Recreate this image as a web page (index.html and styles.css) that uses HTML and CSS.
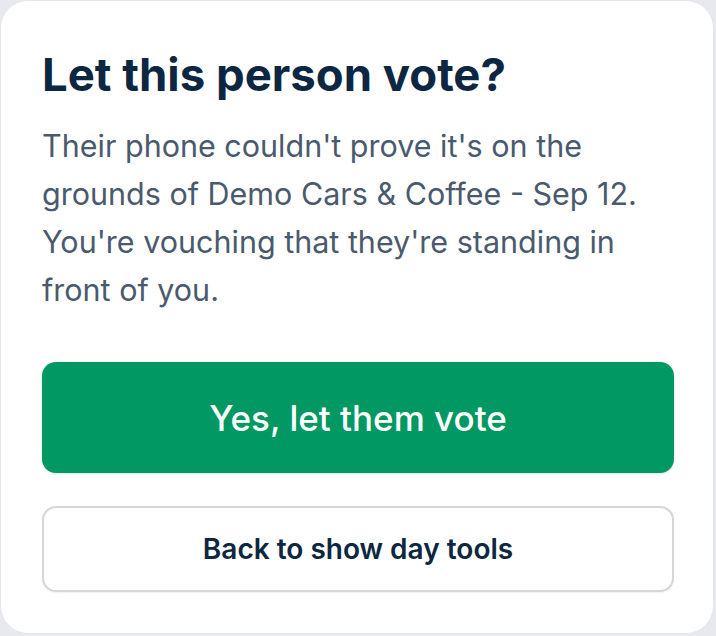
FILE: index.html
```html
<!DOCTYPE html>
<html lang="en">
<head>
<meta charset="utf-8">
<title>Let this person vote?</title>
<link rel="stylesheet" href="styles.css">
</head>
<body>
<div class="card">
  <h1 class="title">Let this person vote?</h1>
  <p class="desc">Their phone couldn't prove it's on the grounds of Demo Cars &amp; Coffee - Sep 12. You're vouching that they're standing in front of you.</p>
  <div class="actions">
    <button class="btn btn-primary">Yes, let them vote</button>
    <button class="btn btn-secondary">Back to show day tools</button>
  </div>
</div>
</body>
</html>
```
FILE: styles.css
```css
html, body {
  margin: 0;
  padding: 0;
}
body {
  background: #e8e9ee;
  width: 716px;
  height: 636px;
  font-family: Inter, "Noto Sans", sans-serif;
}
.card {
  box-sizing: border-box;
  width: 714px;
  height: 634px;
  background: #ffffff;
  border: 1px solid #e4e5ea;
  border-radius: 28px;
  padding: 46px 40px 0 41px;
}
.title {
  margin: 0;
  font-size: 45.5px;
  line-height: 56px;
  font-weight: 700;
  color: #0d2742;
}
.desc {
  margin: 19px 0 0;
  font-size: 30.5px;
  line-height: 48px;
  color: #4a5a6e;
  font-weight: 400;
}
.actions {
  display: flex;
  flex-direction: column;
  gap: 33px;
  margin-top: 48px;
}
.btn {
  font-family: Inter, "Noto Sans", sans-serif;
  width: 632px;
  border-radius: 14px;
  cursor: pointer;
}
.btn-primary {
  height: 111px;
  background: #029863;
  border: none;
  color: #ffffff;
  font-size: 35px;
  font-weight: 500;
  box-shadow: 0 1px 3px rgba(0,0,0,0.12);
}
.btn-secondary {
  height: 86px;
  background: #ffffff;
  border: 2px solid #d3d6dd;
  color: #0d2742;
  font-size: 28px;
  font-weight: 600;
  box-shadow: 0 1px 2px rgba(0,0,0,0.06);
}
```
